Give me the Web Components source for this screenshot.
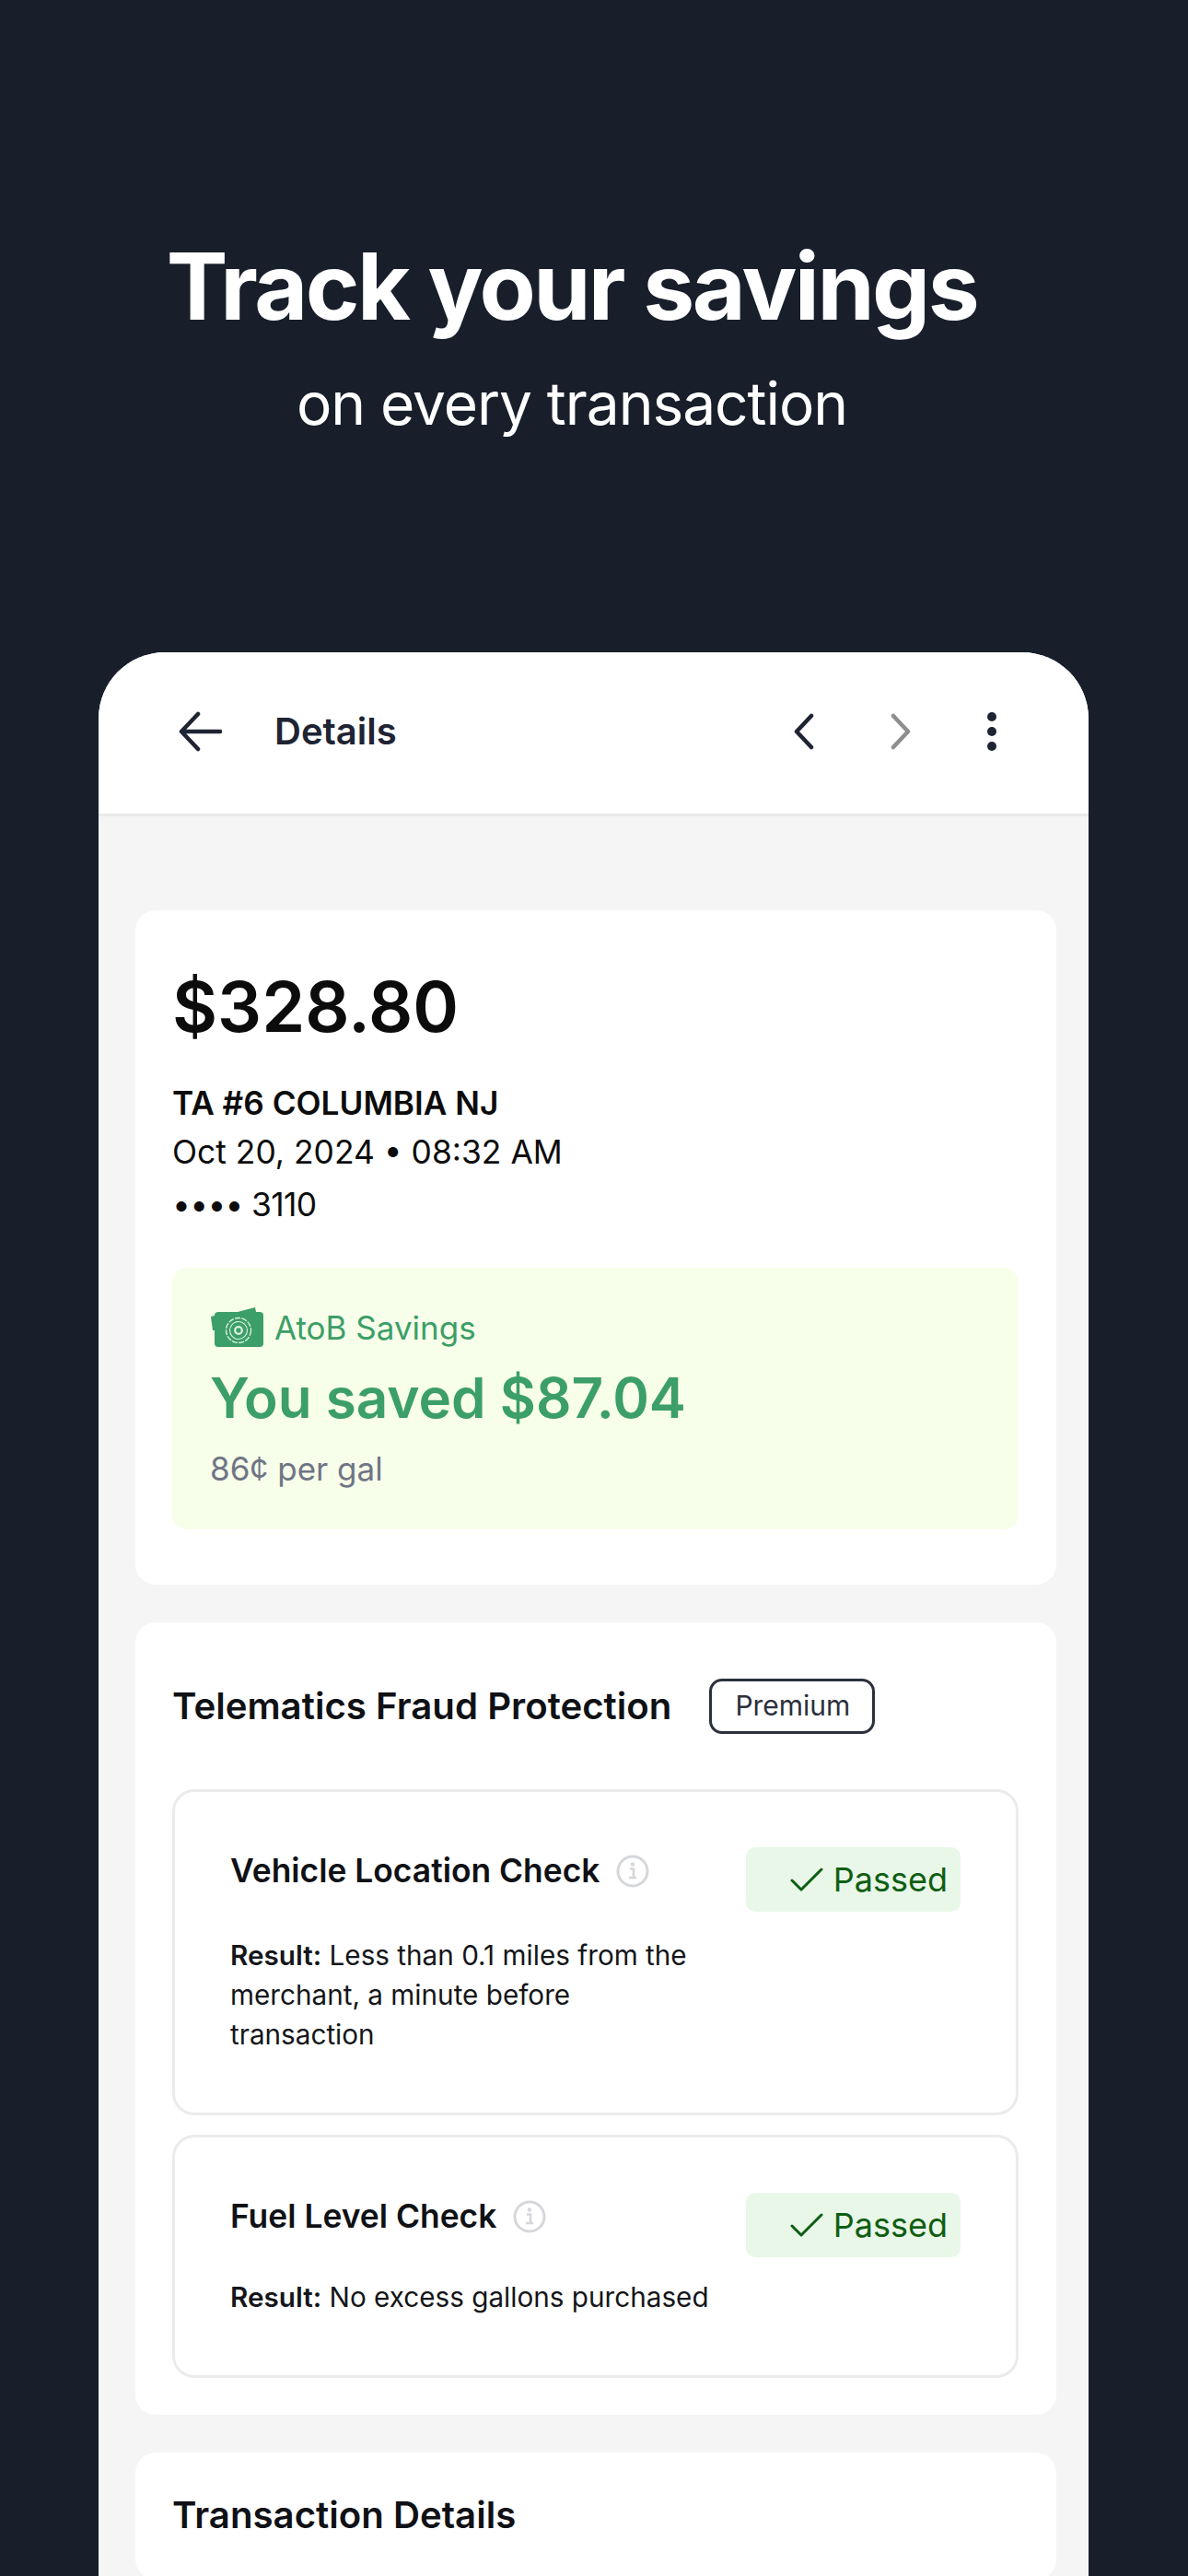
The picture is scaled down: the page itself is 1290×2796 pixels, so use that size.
<!DOCTYPE html>
<html lang="en">
<head>
<meta charset="utf-8">
<title>Track your savings</title>
<style>
html, body { margin: 0; padding: 0; background: #181f2b; }
body { width: 1290px; height: 2796px; overflow: hidden; font-family: Inter, "Liberation Sans", sans-serif; }
</style>
</head>
<body>
<promo-hero heading="Track your savings" sub="on every transaction"></promo-hero>
<phone-frame>
  <nav-bar slot="nav" title="Details"></nav-bar>
  <white-card>
    <txn-summary amount="$328.80" merchant="TA #6 COLUMBIA NJ" date="Oct 20, 2024 • 08:32 AM" card="•••• 3110"></txn-summary>
    <savings-panel label="AtoB Savings" saved="You saved $87.04" rate="86¢ per gal"></savings-panel>
  </white-card>
  <white-card>
    <section-title badge="Premium">Telematics Fraud Protection</section-title>
    <check-card name="Vehicle Location Check" result="Less than 0.1 miles from the|merchant, a minute before|transaction" tall></check-card>
    <check-card name="Fuel Level Check" result="No excess gallons purchased"></check-card>
  </white-card>
  <white-card>
    <section-title compact>Transaction Details</section-title>
  </white-card>
</phone-frame>

<script>
class PromoHero extends HTMLElement {
    constructor() {
        super();
        this.attachShadow({ mode: 'open' });
    }

    connectedCallback() {
        this.shadowRoot.innerHTML = `
            <style>
                :host { display: block; height: 708px; box-sizing: border-box; padding: 249px 48px 0 0; color: #fff; text-align: center; }
                h1 { margin: 0; font: 700 100px/124px Inter, sans-serif; letter-spacing: -2.55px; }
                p { margin: 0; font: 400 64px/80px Inter, sans-serif; letter-spacing: -1.05px; padding-top: 25px; }
            </style>
            <h1>${this.getAttribute('heading')}</h1>
            <p>${this.getAttribute('sub')}</p>
        `;
    }
}

class PhoneFrame extends HTMLElement {
    constructor() {
        super();
        this.attachShadow({ mode: 'open' });
    }

    connectedCallback() {
        this.shadowRoot.innerHTML = `
            <style>
                :host { display: block; margin-left: 107px; width: 1075px; height: 2088px; background: #f5f5f6; border-radius: 72px 72px 0 0; overflow: hidden; }
                .body { display: flex; flex-direction: column; gap: 41px; padding: 102px 35px 0 40px; }
            </style>
            <slot name="nav"></slot>
            <div class="body"><slot></slot></div>
        `;
    }
}

class NavBar extends HTMLElement {
    constructor() {
        super();
        this.attachShadow({ mode: 'open' });
    }

    connectedCallback() {
        this.shadowRoot.innerHTML = `
            <style>
                :host { display: flex; align-items: center; box-sizing: border-box; height: 178px; padding: 0 100px 4px 86px; background: #fff; border-bottom: 3px solid #e9e9e9; color: #1e2433; }
                svg { display: block; fill: none; stroke: currentColor; stroke-linecap: round; stroke-linejoin: round; }
                .title { font: 600 40px/48px Inter, sans-serif; margin-left: 57px; flex: 1; }
                .icons { display: flex; align-items: center; gap: 79px; }
                .off { color: #8e8e8e; }
                .more { margin-left: 2px; }
            </style>
            <svg width="48" height="44" viewBox="0 0 48 44" stroke-width="4.5"><path d="M46 22H4M22 3 4 22l18 19"/></svg>
            <span class="title">${this.getAttribute('title')}</span>
            <div class="icons">
                <svg width="26" height="40" viewBox="0 0 26 40" stroke-width="4.5"><path d="M21 3 5 20l16 17"/></svg>
                <svg class="off" width="26" height="40" viewBox="0 0 26 40" stroke-width="4.5"><path d="M5 3l16 17L5 37"/></svg>
                <svg class="more" width="10" height="42" viewBox="0 0 10 42"><g fill="currentColor" stroke="none"><circle cx="5" cy="5" r="5"/><circle cx="5" cy="21" r="5"/><circle cx="5" cy="37" r="5"/></g></svg>
            </div>
        `;
    }
}

class WhiteCard extends HTMLElement {
    constructor() {
        super();
        this.attachShadow({ mode: 'open' });
    }

    connectedCallback() {
        this.shadowRoot.innerHTML = `
            <style>
                :host { display: block; box-sizing: border-box; padding: 40px 41px 40px 40px; background: #fff; border-radius: 22px; }
            </style>
            <slot></slot>
        `;
    }
}

class TxnSummary extends HTMLElement {
    constructor() {
        super();
        this.attachShadow({ mode: 'open' });
    }

    connectedCallback() {
        this.shadowRoot.innerHTML = `
            <style>
                :host { display: block; color: #0c0c0c; padding-bottom: 41px; }
                .amount { font: 600 75.5px/96px Inter, sans-serif; margin: 17px 0 29px; }
                .merchant { font: 600 35.2px/54px Inter, sans-serif; }
                .line { font: 400 35.4px/54px Inter, sans-serif; }
                .line + .line { margin-top: 3px; letter-spacing: -0.7px; }
            </style>
            <div class="amount">${this.getAttribute('amount')}</div>
            <div class="merchant">${this.getAttribute('merchant')}</div>
            <div class="line">${this.getAttribute('date')}</div>
            <div class="line">${this.getAttribute('card')}</div>
        `;
    }
}

class SavingsPanel extends HTMLElement {
    constructor() {
        super();
        this.attachShadow({ mode: 'open' });
    }

    connectedCallback() {
        this.shadowRoot.innerHTML = `
            <style>
                :host { display: block; box-sizing: border-box; height: 284px; padding: 43px 41px 0; margin-bottom: 20px; background: #f7fee9; border-radius: 16px; color: #3c9e68; }
                .label { display: flex; align-items: center; gap: 12px; font: 400 35px/44px Inter, sans-serif; }
                svg { display: block; }
                .saved { font: 600 60.2px/76px Inter, sans-serif; margin-top: 17px; }
                .rate { font: 400 35px/44px Inter, sans-serif; color: #6f7585; margin-top: 16px; }
            </style>
            <div class="label">
                <svg width="58" height="44" viewBox="0 0 58 44">
                    <path d="M1 10 5 9V25H3zM30 5 49 0 50 5z" fill="#3c9e68"/>
                    <rect x="5" y="5" width="53" height="38" rx="4" fill="#3c9e68"/>
                    <g fill="none" stroke="#dff3e4">
                        <circle cx="31" cy="25" r="13.5" stroke-width="1.3" stroke-dasharray="6 1.4"/>
                        <circle cx="31" cy="25" r="9.5" stroke-width="1.1"/>
                        <circle cx="31" cy="25" r="3.8" stroke-width="2.2"/>
                    </g>
                </svg>
                <span>${this.getAttribute('label')}</span>
            </div>
            <div class="saved">${this.getAttribute('saved')}</div>
            <div class="rate">${this.getAttribute('rate')}</div>
        `;
    }
}

class SectionTitle extends HTMLElement {
    constructor() {
        super();
        this.attachShadow({ mode: 'open' });
    }

    connectedCallback() {
        const badge = this.getAttribute('badge');
        this.shadowRoot.innerHTML = `
            <style>
                :host { display: flex; align-items: center; gap: 41px; height: 60px; margin: 21px 0 0; color: #0f1115; font: 600 40.2px/60px Inter, sans-serif; }
                :host([compact]) { margin-top: -2px; }
                .badge { box-sizing: border-box; height: 60px; padding: 0 24px 0 25px; border: 3px solid #2b303b; border-radius: 14px; font: 400 30px/53px Inter, sans-serif; color: #2b303b; }
            </style>
            <slot></slot>
            ${badge ? `<span class="badge">${badge}</span>` : ''}
        `;
    }
}

class CheckCard extends HTMLElement {
    constructor() {
        super();
        this.attachShadow({ mode: 'open' });
    }

    connectedCallback() {
        const tall = this.hasAttribute('tall');
        // lines are given split by | so each one stays its own text
        const lines = this.getAttribute('result').split('|').join('<br>');
        this.shadowRoot.innerHTML = `
            <style>
                :host { display: flex; justify-content: space-between; box-sizing: border-box; border: 3px solid #ebebeb; border-radius: 24px; padding: 60px 60px 0 60px; margin-top: 21px; height: ${tall ? 354 : 264}px; }
                :host([tall]) { margin-top: 60px; }
                .name { display: flex; align-items: center; gap: 18px; margin-top: 4px; font: 600 35.4px/44px Inter, sans-serif; color: #0f1115; }
                .info { display: block; }
                .result { font: 400 29.7px/43px Inter, sans-serif; color: #14161a; margin-top: ${tall ? 48 : 44}px; width: 530px; }
                b { font-weight: 600; }
                .pill { flex: none; display: flex; align-items: center; justify-content: flex-end; box-sizing: border-box; width: 233px; height: 70px; padding-right: 14px; gap: 11px; border-radius: 10px; background: #e9f7e9; color: #0f5e13; font: 400 36px/44px Inter, sans-serif; }
            </style>
            <div>
                <div class="name">
                    <span>${this.getAttribute('name')}</span>
                    <svg class="info" width="36" height="36" viewBox="0 0 36 36" fill="none"><circle cx="18" cy="18" r="16" stroke="#d5d7da" stroke-width="3"/><path d="M15 15.5h4v9M14 25h8" stroke="#d5d7da" stroke-width="2.6"/><circle cx="18" cy="10.5" r="2.2" fill="#d5d7da"/></svg>
                </div>
                <div class="result"><b>Result:</b> ${lines}</div>
            </div>
            <div class="pill">
                <svg width="36" height="26" viewBox="0 0 36 26" fill="none" stroke="#0f5e13" stroke-width="3" stroke-linecap="round" stroke-linejoin="round"><path d="M2 14 12 24 34 2"/></svg>
                <span>Passed</span>
            </div>
        `;
    }
}

customElements.define('promo-hero', PromoHero);
customElements.define('phone-frame', PhoneFrame);
customElements.define('nav-bar', NavBar);
customElements.define('white-card', WhiteCard);
customElements.define('txn-summary', TxnSummary);
customElements.define('savings-panel', SavingsPanel);
customElements.define('section-title', SectionTitle);
customElements.define('check-card', CheckCard);
</script>
</body>
</html>
